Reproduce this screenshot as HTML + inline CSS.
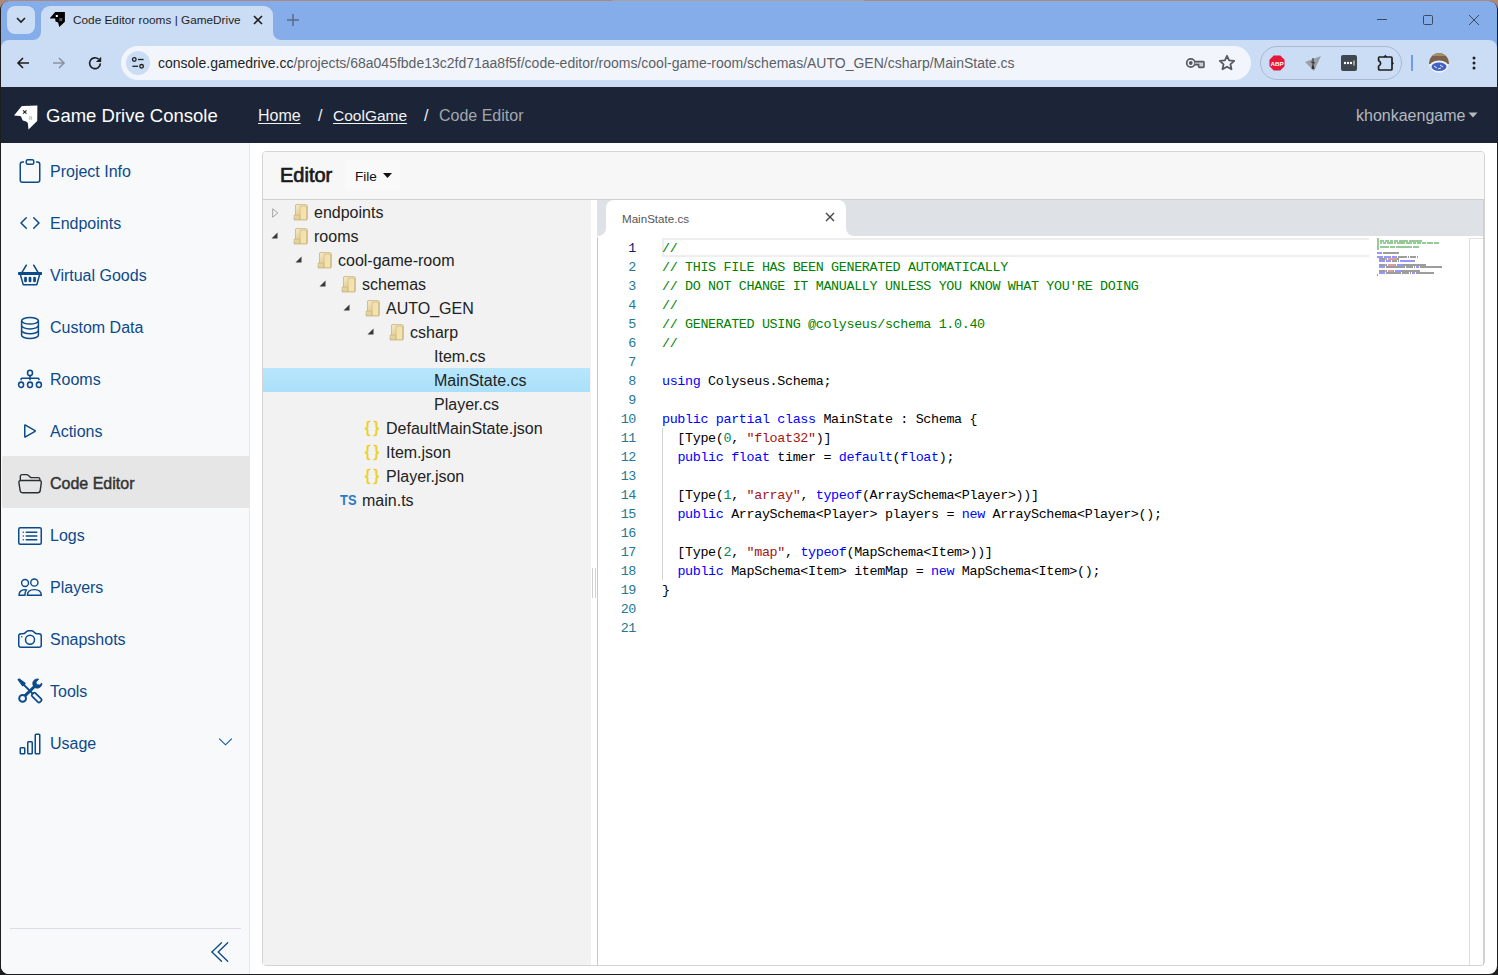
<!DOCTYPE html>
<html><head><meta charset="utf-8">
<style>
*{box-sizing:border-box;margin:0;padding:0}
html,body{width:1498px;height:975px;overflow:hidden;background:#b08676;font-family:"Liberation Sans",sans-serif;position:relative}
.a{position:absolute}
.nw{white-space:nowrap}
.mono{font-family:"Liberation Mono",monospace;font-size:13.4px;letter-spacing:-0.35px;line-height:19px;padding-top:1px;white-space:pre}
</style></head><body>
<!-- window frame -->
<div class="a" style="left:612px;top:0;width:252px;height:1px;background:#aca19a"></div>
<div class="a" style="left:0;top:1px;width:1498px;height:974px;background:#1e1e1e;border-radius:9px 9px 0 0"></div>
<!-- tab strip -->
<div class="a" style="left:1px;top:1px;width:1496px;height:39px;background:#85adea;border-radius:8px 8px 0 0"></div>
<div class="a" style="left:41px;top:6px;width:232px;height:40px;border-radius:9px 9px 0 0;background:#cbdcf5"></div>
<div class="a" style="left:33px;top:32px;width:8px;height:8px;background:#cbdcf5"></div>
<div class="a" style="left:25px;top:24px;width:16px;height:16px;border-radius:0 0 8px 0;background:#85adea"></div>
<div class="a" style="left:273px;top:32px;width:8px;height:8px;background:#cbdcf5"></div>
<div class="a" style="left:273px;top:24px;width:16px;height:16px;border-radius:0 0 0 8px;background:#85adea"></div>
<div class="a" style="left:7px;top:6px;width:28px;height:28px;border-radius:8px;background:#cbdcf5"></div>
<svg class="a" style="left:15px;top:15px" width="12" height="10" viewBox="0 0 12 10"><path d="M2 3 L6 7 L10 3" fill="none" stroke="#1f1f1f" stroke-width="1.6"/></svg>
<svg class="a" style="left:49px;top:11px" width="16" height="16" viewBox="0 0 16 16"><path d="M1 6.9 L6.2 1 H15.9 V10.7 L10.3 16 L9.1 11.5 L6.5 10.5 L6.2 7.6 L1 7.5 Z" fill="#000"/><rect x="6.8" y="4" width="2" height="2" fill="#fff"/><rect x="10.3" y="7.1" width="3" height="3" fill="#5a5a5a"/></svg>
<div class="a nw" style="left:73px;top:13px;font-size:11.8px;line-height:15px;color:#1f1f1f">Code Editor rooms | GameDrive</div>
<svg class="a" style="left:252px;top:14px" width="12" height="12" viewBox="0 0 12 12"><path d="M2 2 L10 10 M10 2 L2 10" stroke="#1f1f1f" stroke-width="1.6"/></svg>
<svg class="a" style="left:286px;top:13px" width="14" height="14" viewBox="0 0 14 14"><path d="M7 1 V13 M1 7 H13" stroke="#5a6a86" stroke-width="1.5"/></svg>
<svg class="a" style="left:1376px;top:14px" width="12" height="12" viewBox="0 0 12 12"><path d="M1 5.5 H11" stroke="#3b4a60" stroke-width="1"/></svg>
<svg class="a" style="left:1422px;top:14px" width="12" height="12" viewBox="0 0 12 12"><rect x="1.5" y="1.5" width="9" height="9" rx="1" fill="none" stroke="#3b4a60" stroke-width="1"/></svg>
<svg class="a" style="left:1468px;top:14px" width="12" height="12" viewBox="0 0 12 12"><path d="M1 1 L11 11 M11 1 L1 11" stroke="#3b4a60" stroke-width="1"/></svg>

<!-- toolbar -->
<div class="a" style="left:1px;top:40px;width:1496px;height:8px;background:#85adea"></div>
<div class="a" style="left:1px;top:40px;width:1496px;height:47px;background:#cbdcf5;border-radius:8px 8px 0 0"></div>
<svg class="a" style="left:15px;top:55px" width="16" height="16" viewBox="0 0 16 16"><path d="M14 8 H3 M8 3 L3 8 L8 13" fill="none" stroke="#1f1f1f" stroke-width="1.6"/></svg>
<svg class="a" style="left:51px;top:55px" width="16" height="16" viewBox="0 0 16 16"><path d="M2 8 H13 M8 3 L13 8 L8 13" fill="none" stroke="#8a93a3" stroke-width="1.6"/></svg>
<svg class="a" style="left:87px;top:55px" width="16" height="16" viewBox="0 0 16 16"><path d="M13.4 8.4 A5.4 5.4 0 1 1 11.6 4.2" fill="none" stroke="#1f1f1f" stroke-width="1.6"/><path d="M14.2 1.8 V7.1 H8.9 Z" fill="#1f1f1f"/></svg>
<div class="a" style="left:121px;top:46px;width:1130px;height:34px;border-radius:17px;background:#f2f6fc"></div>
<div class="a" style="left:126px;top:51px;width:24px;height:24px;border-radius:12px;background:#cbdcf5"></div>
<svg class="a" style="left:130px;top:55px" width="16" height="16" viewBox="0 0 16 16"><circle cx="4.3" cy="4.5" r="1.8" fill="none" stroke="#1f1f1f" stroke-width="1.3"/><path d="M8 4.5 H13.6" stroke="#1f1f1f" stroke-width="1.3"/><circle cx="11.6" cy="11.3" r="1.8" fill="none" stroke="#1f1f1f" stroke-width="1.3"/><path d="M2.4 11.3 H8" stroke="#1f1f1f" stroke-width="1.3"/></svg>
<div class="a nw" style="left:158px;top:55px;font-size:14px;line-height:17px;color:#1f1f1f">console.gamedrive.cc<span style="color:#5b5f66">/projects/68a045fbde13c2fd71aa8f5f/code-editor/rooms/cool-game-room/schemas/AUTO_GEN/csharp/MainState.cs</span></div>
<svg class="a" style="left:1184px;top:56px" width="22" height="14" viewBox="0 0 22 14"><circle cx="6.8" cy="7" r="4.1" fill="none" stroke="#555a60" stroke-width="1.7"/><circle cx="6.8" cy="7" r="1.9" fill="#555a60"/><path d="M10.8 5.6 H19.3 Q20 5.6 20 6.3 V10.6 Q20 11.4 19.2 11.4 H15.4 Q14.6 11.4 14.6 10.6 V8.6 H10.6" fill="#c9ccd1" stroke="#555a60" stroke-width="1.6" stroke-linejoin="round"/></svg>
<svg class="a" style="left:1218px;top:54px" width="18" height="18" viewBox="0 0 18 18"><path d="M9 1.8 L11.1 6.4 L16.2 6.9 L12.4 10.3 L13.5 15.3 L9 12.7 L4.5 15.3 L5.6 10.3 L1.8 6.9 L6.9 6.4 Z" fill="none" stroke="#555a60" stroke-width="1.8" stroke-linejoin="round"/></svg>
<div class="a" style="left:1260px;top:46px;width:142px;height:34px;border-radius:17px;border:1px solid #aab9d0"></div>
<svg class="a" style="left:1269px;top:55px" width="16" height="16" viewBox="0 0 18 18"><path d="M5.3 0.5 H12.7 L17.5 5.3 V12.7 L12.7 17.5 H5.3 L0.5 12.7 V5.3 Z" fill="#e3193b"/><text x="9" y="12" font-family="Liberation Sans" font-size="7" font-weight="700" fill="#fff" text-anchor="middle">ABP</text></svg>
<svg class="a" style="left:1304px;top:54px" width="18" height="18" viewBox="0 0 18 18"><path d="M1 8 L17 2 L10 17 Z" fill="#9aa0a6"/><path d="M9 4 L9 15 M7 8 L11 9 M8 15 L9 11 L10 15" stroke="#333" stroke-width="1.1" fill="none"/></svg>
<div class="a" style="left:1341px;top:55px;width:16px;height:16px;border-radius:2px;background:#3c474e"></div>
<svg class="a" style="left:1341px;top:55px" width="16" height="16" viewBox="0 0 16 16"><circle cx="4" cy="8" r="1.2" fill="#fff"/><circle cx="7" cy="8" r="1.2" fill="#fff"/><circle cx="10" cy="8" r="1.2" fill="#fff"/><path d="M13 5.5 V10.5" stroke="#fff" stroke-width="1"/></svg>
<svg class="a" style="left:1376px;top:53px" width="20" height="20" viewBox="0 0 20 20"><path d="M3.2 4 H15 Q16 4 16 5 V16 Q16 17 15 17 H3.6 Q2.6 17 2.6 16 V13.2 Q4.6 12.2 4.6 10.3 Q4.6 8.4 2.6 7.6 V5 Q2.6 4 3.2 4 Z" fill="none" stroke="#1f1f1f" stroke-width="1.7" stroke-linejoin="round"/><path d="M7.5 4 L9.3 1.6 L11.1 4 Z" fill="#1f1f1f"/><path d="M16 8.4 L18 10.3 L16 12.2 Z" fill="#1f1f1f"/></svg>
<div class="a" style="left:1411px;top:55px;width:2px;height:16px;background:#6c9bef"></div>
<svg class="a" style="left:1429px;top:53px" width="20" height="20" viewBox="0 0 20 20"><defs><clipPath id="av"><circle cx="10" cy="10" r="10"/></clipPath></defs><g clip-path="url(#av)"><rect width="20" height="20" fill="#cbdcf5"/><rect x="0" y="0" width="20" height="11" fill="#7b6149"/><rect x="0" y="0" width="20" height="3" fill="#a88c6a"/><ellipse cx="10" cy="14" rx="10" ry="6.5" fill="#eef2fa"/><ellipse cx="10" cy="13.8" rx="7.5" ry="4.2" fill="#3f62c4"/><path d="M5 13 L8 15 M11 12 L14 14 M9 16 L12 15" stroke="#e8eef8" stroke-width="1"/></g></svg>
<svg class="a" style="left:1468px;top:55px" width="12" height="16" viewBox="0 0 12 16"><circle cx="6" cy="3" r="1.5" fill="#1f1f1f"/><circle cx="6" cy="8" r="1.5" fill="#1f1f1f"/><circle cx="6" cy="13" r="1.5" fill="#1f1f1f"/></svg>

<!-- nav -->
<div class="a" style="left:1px;top:87px;width:1496px;height:56px;background:#1c2538"></div>
<svg class="a" style="left:10px;top:100px" width="32" height="34" viewBox="0 0 32 34"><path d="M4 15.4 L11.6 6.2 Q12 6 13 6 L27.4 5.6 L27.2 21 L18.5 29.6 L17.8 23 Q17 21.5 14.5 21 Q12.5 20.8 12 19 Q11.5 16 10 15.9 Z" fill="#fff"/><path d="M13.1 10.3 L16.5 13.7 M16.5 10.3 L13.1 13.7" stroke="#1c2538" stroke-width="1.2"/><path d="M19.6 15.8 V20 M21.4 15.8 V20 M18.8 17.2 H22.2 M18.8 18.8 H22.2" stroke="#a4a9b2" stroke-width="0.5"/></svg>
<div class="a nw" style="left:46px;top:105px;font-size:18.5px;line-height:22px;color:#fff">Game Drive Console</div>
<div class="a nw" style="left:258px;top:106px;font-size:16px;line-height:19px;color:#f2f2f2;text-decoration:underline;text-underline-offset:2px">Home</div>
<div class="a nw" style="left:318px;top:106px;font-size:16px;line-height:19px;color:#f2f2f2">/</div>
<div class="a nw" style="left:333px;top:106px;font-size:15.5px;line-height:19px;color:#f2f2f2;text-decoration:underline;text-underline-offset:2px">CoolGame</div>
<div class="a nw" style="left:424px;top:106px;font-size:16px;line-height:19px;color:#f2f2f2">/</div>
<div class="a nw" style="left:439px;top:106px;font-size:16px;line-height:19px;color:#a3a7ae">Code Editor</div>
<div class="a nw" style="left:1356px;top:106px;font-size:16px;line-height:19px;color:#b4b8bf">khonkaengame</div>
<svg class="a" style="left:1468px;top:112px" width="10" height="6" viewBox="0 0 10 6"><path d="M0.5 0.5 H9.5 L5 5.5 Z" fill="#b4b8bf"/></svg>
<!-- page -->
<div class="a" style="left:1px;top:143px;width:1496px;height:831px;background:#fff;border-radius:0 0 8px 8px"></div>
<div class="a" style="left:1px;top:143px;width:249px;height:831px;background:#f8f9fa;border-right:1px solid #e6e7e8;border-radius:0 0 0 8px"></div>
<!-- sidebar items -->
<svg class="a" style="left:18px;top:159px;color:#0c4a8a" width="24" height="24" viewBox="0 0 16 16" fill="currentColor"><path d="M4 1.5H3a2 2 0 0 0-2 2V14a2 2 0 0 0 2 2h10a2 2 0 0 0 2-2V3.5a2 2 0 0 0-2-2h-1v1h1a1 1 0 0 1 1 1V14a1 1 0 0 1-1 1H3a1 1 0 0 1-1-1V3.5a1 1 0 0 1 1-1h1v-1z"/><path d="M9.5 1a.5.5 0 0 1 .5.5v1a.5.5 0 0 1-.5.5h-3a.5.5 0 0 1-.5-.5v-1a.5.5 0 0 1 .5-.5h3zm-3-1A1.5 1.5 0 0 0 5 1.5v1A1.5 1.5 0 0 0 6.5 4h3A1.5 1.5 0 0 0 11 2.5v-1A1.5 1.5 0 0 0 9.5 0h-3z"/></svg>
<div class="a nw" style="left:50px;top:162px;font-size:16px;font-weight:400;line-height:20px;color:#0c4a8a">Project Info</div>
<svg class="a" style="left:18px;top:211px;color:#0c4a8a" width="24" height="24" viewBox="0 0 16 16" fill="currentColor"><path d="M5.854 4.854a.5.5 0 1 0-.708-.708l-3.5 3.5a.5.5 0 0 0 0 .708l3.5 3.5a.5.5 0 0 0 .708-.708L2.707 8l3.147-3.146zm4.292 0a.5.5 0 0 1 .708-.708l3.5 3.5a.5.5 0 0 1 0 .708l-3.5 3.5a.5.5 0 0 1-.708-.708L13.293 8l-3.147-3.146z"/></svg>
<div class="a nw" style="left:50px;top:214px;font-size:16px;font-weight:400;line-height:20px;color:#0c4a8a">Endpoints</div>
<svg class="a" style="left:18px;top:263px;color:#0c4a8a" width="24" height="24" viewBox="0 0 16 16" fill="currentColor"><path d="M5.757 1.071a.5.5 0 0 1 .172.686L3.383 6h9.234L10.07 1.757a.5.5 0 1 1 .858-.514L13.783 6H15.5a.5.5 0 0 1 .5.5v1a.5.5 0 0 1-.5.5h-.623l-1.844 6.456a.75.75 0 0 1-.722.544H3.69a.75.75 0 0 1-.722-.544L1.123 8H.5a.5.5 0 0 1-.5-.5v-1A.5.5 0 0 1 .5 6h1.717L5.07 1.243a.5.5 0 0 1 .686-.172zM2.163 8l1.714 6h8.246l1.714-6H2.163z"/><rect x="4.1" y="9.1" width="1.85" height="3.8" rx="0.9"/><rect x="7.08" y="9.1" width="1.85" height="3.8" rx="0.9"/><rect x="10.1" y="9.1" width="1.85" height="3.8" rx="0.9"/></svg>
<div class="a nw" style="left:50px;top:266px;font-size:16px;font-weight:400;line-height:20px;color:#0c4a8a">Virtual Goods</div>
<svg class="a" style="left:18px;top:315.5px;color:#0c4a8a" width="24" height="24" viewBox="0 0 16 16" fill="currentColor"><g fill="none" stroke="currentColor" stroke-width="1"><ellipse cx="8" cy="3.2" rx="5.6" ry="2.2"/><path d="M2.4 3.2V12.8C2.4 14 4.9 15 8 15S13.6 14 13.6 12.8V3.2"/><path d="M2.4 6.4C2.4 7.6 4.9 8.6 8 8.6S13.6 7.6 13.6 6.4"/><path d="M2.4 9.6C2.4 10.8 4.9 11.8 8 11.8S13.6 10.8 13.6 9.6"/></g></svg>
<div class="a nw" style="left:50px;top:318px;font-size:16px;font-weight:400;line-height:20px;color:#0c4a8a">Custom Data</div>
<svg class="a" style="left:16px;top:365px" width="28" height="28" viewBox="0 0 28 28"><g fill="none" stroke="#0c4a8a" stroke-width="1.55"><ellipse cx="14" cy="7.9" rx="2.5" ry="2.7"/><ellipse cx="5.1" cy="19.8" rx="2.5" ry="2.7"/><ellipse cx="14" cy="19.8" rx="2.5" ry="2.7"/><ellipse cx="22.9" cy="19.8" rx="2.5" ry="2.7"/><path d="M5.1 15.3 V14 Q5.1 13.2 5.9 13.2 H22.1 Q22.9 13.2 22.9 14 V15.3 M14 10.6 V15.3"/></g></svg>
<div class="a nw" style="left:50px;top:370px;font-size:16px;font-weight:400;line-height:20px;color:#0c4a8a">Rooms</div>
<svg class="a" style="left:18px;top:419px;color:#0c4a8a" width="24" height="24" viewBox="0 0 16 16" fill="currentColor"><path d="M10.804 8 5 4.633v6.734L10.804 8zm.792-.696a.802.802 0 0 1 0 1.392l-6.363 3.692C4.713 12.69 4 12.345 4 11.692V4.308c0-.653.713-.998 1.233-.696l6.363 3.692z"/></svg>
<div class="a nw" style="left:50px;top:422px;font-size:16px;font-weight:400;line-height:20px;color:#0c4a8a">Actions</div>
<div class="a" style="left:2px;top:456px;width:247px;height:52px;background:#e6e6e6;border-radius:2px 0 0 2px"></div>
<svg class="a" style="left:16px;top:470px" width="28" height="28" viewBox="0 0 28 28"><g fill="none" stroke="#2a2f36" stroke-width="1.4" stroke-linejoin="round"><path d="M4.3 10.5 V6.4 Q4.3 4.6 6.1 4.6 H10.6 Q11.6 4.6 12.4 5.4 L14.2 7.1 Q14.8 7.6 15.5 7.6 H22.2 Q23.9 7.6 23.9 9.3 V10.5"/><path d="M5 10.5 H23.2 Q25.5 10.5 25.3 12.6 L24.2 20.6 Q23.9 22.7 21.8 22.7 H6.4 Q4.5 22.7 4.2 20.8 L2.9 12.6 Q2.7 10.5 5 10.5 Z"/></g></svg>
<div class="a nw" style="left:50px;top:474px;font-size:16px;font-weight:400;line-height:20px;color:#333;-webkit-text-stroke:0.45px #333">Code Editor</div>
<svg class="a" style="left:18px;top:523.5px;color:#0c4a8a" width="24" height="24" viewBox="0 0 16 16" fill="currentColor"><path d="M14.5 3a.5.5 0 0 1 .5.5v9a.5.5 0 0 1-.5.5h-13a.5.5 0 0 1-.5-.5v-9a.5.5 0 0 1 .5-.5h13zm-13-1A1.5 1.5 0 0 0 0 3.5v9A1.5 1.5 0 0 0 1.5 14h13a1.5 1.5 0 0 0 1.5-1.5v-9A1.5 1.5 0 0 0 14.5 2h-13z"/><path d="M5 8a.5.5 0 0 1 .5-.5h7a.5.5 0 0 1 0 1h-7A.5.5 0 0 1 5 8zm0-2.5a.5.5 0 0 1 .5-.5h7a.5.5 0 0 1 0 1h-7a.5.5 0 0 1-.5-.5zm0 5a.5.5 0 0 1 .5-.5h7a.5.5 0 0 1 0 1h-7a.5.5 0 0 1-.5-.5zm-1-5a.5.5 0 1 1-1 0 .5.5 0 0 1 1 0zM4 8a.5.5 0 1 1-1 0 .5.5 0 0 1 1 0zm0 2.5a.5.5 0 1 1-1 0 .5.5 0 0 1 1 0z"/></svg>
<div class="a nw" style="left:50px;top:526px;font-size:16px;font-weight:400;line-height:20px;color:#0c4a8a">Logs</div>
<svg class="a" style="left:18px;top:576.5px;color:#0c4a8a" width="24" height="24" viewBox="0 0 16 16" fill="currentColor"><g fill="none" stroke="currentColor" stroke-width="0.95"><circle cx="4.7" cy="4" r="2.3"/><circle cx="10.9" cy="3.7" r="2.4"/><path d="M0.7 12.2Q0.7 9.3 3.4 8.6Q4.4 8.4 5.6 8.6Q4.6 9.9 4.6 12.2Z"/><path d="M6.3 12.2Q6.3 8.4 10.9 8.4Q15.5 8.4 15.5 12.2Z"/></g></svg>
<div class="a nw" style="left:50px;top:578px;font-size:16px;font-weight:400;line-height:20px;color:#0c4a8a">Players</div>
<svg class="a" style="left:18px;top:627px;color:#0c4a8a" width="24" height="24" viewBox="0 0 16 16" fill="currentColor"><path d="M15 12a1 1 0 0 1-1 1H2a1 1 0 0 1-1-1V6a1 1 0 0 1 1-1h1.172a3 3 0 0 0 2.12-.879l.83-.828A1 1 0 0 1 6.827 3h2.344a1 1 0 0 1 .707.293l.828.828A3 3 0 0 0 12.828 5H14a1 1 0 0 1 1 1v6zM2 4a2 2 0 0 0-2 2v6a2 2 0 0 0 2 2h12a2 2 0 0 0 2-2V6a2 2 0 0 0-2-2h-1.172a2 2 0 0 1-1.414-.586l-.828-.828A2 2 0 0 0 9.172 2H6.828a2 2 0 0 0-1.414.586l-.828.828A2 2 0 0 1 3.172 4H2z"/><path d="M8 11a2.5 2.5 0 1 1 0-5 2.5 2.5 0 0 1 0 5zm0 1a3.5 3.5 0 1 0 0-7 3.5 3.5 0 0 0 0 7zM3 6.5a.5.5 0 1 1-1 0 .5.5 0 0 1 1 0z"/></svg>
<div class="a nw" style="left:50px;top:630px;font-size:16px;font-weight:400;line-height:20px;color:#0c4a8a">Snapshots</div>
<svg class="a" style="left:16px;top:677px" width="28" height="28" viewBox="0 0 28 28"><g fill="#0c4a8a" stroke="#0c4a8a"><path d="M2.2 2.6 L3.2 2 L9 6.2 L8.2 8.2 L6.5 8.6 Z" stroke-width="1.2" stroke-linejoin="round"/><path d="M7.5 7.5 L16.5 16.5" stroke-width="1.8"/><rect x="15.2" y="18.3" width="11" height="4.6" rx="1.4" transform="rotate(45 20.7 20.6)" fill="none" stroke-width="1.7"/><circle cx="6.6" cy="21.4" r="3.4" fill="none" stroke-width="1.9"/><path d="M8.9 18.9 L19 9" stroke-width="3"/><path d="M22.8 2.2 A4.6 4.6 0 1 0 25.9 6.1 L23.4 8 L20.5 7.6 L20 5 Z" stroke-width="0.8" stroke-linejoin="round"/></g></svg>
<div class="a nw" style="left:50px;top:682px;font-size:16px;font-weight:400;line-height:20px;color:#0c4a8a">Tools</div>
<svg class="a" style="left:18px;top:731.5px;color:#0c4a8a" width="24" height="24" viewBox="0 0 16 16" fill="currentColor"><path d="M4 11H2v3h2v-3zm5-4H7v7h2V7zm5-5v12h-2V2h2zm-2-1a1 1 0 0 0-1 1v12a1 1 0 0 0 1 1h2a1 1 0 0 0 1-1V2a1 1 0 0 0-1-1h-2zM6 7a1 1 0 0 1 1-1h2a1 1 0 0 1 1 1v7a1 1 0 0 1-1 1H7a1 1 0 0 1-1-1V7zm-5 4a1 1 0 0 1 1-1h2a1 1 0 0 1 1 1v3a1 1 0 0 1-1 1H2a1 1 0 0 1-1-1v-3z"/></svg>
<div class="a nw" style="left:50px;top:734px;font-size:16px;font-weight:400;line-height:20px;color:#0c4a8a">Usage</div>
<svg class="a" style="left:216px;top:735px" width="18" height="14" viewBox="0 0 18 14"><path d="M3.2 3.6 L9.5 9.8 L15.8 3.6" fill="none" stroke="#0b58a8" stroke-width="1.15"/></svg>
<div class="a" style="left:10px;top:928px;width:231px;height:1px;background:#dcdee2"></div>
<svg class="a" style="left:208px;top:940px" width="24" height="24" viewBox="0 0 24 24"><path d="M13.5 2.7 L3.9 11.9 L13.5 21.3 M19.7 2.7 L10.2 11.9 L19.7 21.3" fill="none" stroke="#0c4a8a" stroke-width="1.35" stroke-linecap="round"/></svg>
<!-- editor card -->
<div class="a" style="left:262px;top:151px;width:1223px;height:815px;border:1px solid #d4d4d4;border-radius:4px;background:#fff"></div>
<div class="a" style="left:263px;top:152px;width:1221px;height:48px;background:#f7f7f7;border-bottom:1px solid #cfcfcf;border-radius:3px 3px 0 0"></div>
<div class="a nw" style="left:280px;top:164px;font-size:20px;font-weight:400;line-height:22px;color:#1a1a1a;-webkit-text-stroke:0.7px #1a1a1a">Editor</div>
<div class="a" style="left:345px;top:160px;width:55px;height:31px;background:#f9f9fa;border-radius:4px"></div>
<div class="a nw" style="left:355px;top:168px;font-size:13.6px;line-height:17px;color:#111">File</div>
<svg class="a" style="left:383px;top:173px" width="9" height="5" viewBox="0 0 9 5"><path d="M0 0 H9 L4.5 5 Z" fill="#111"/></svg>
<div class="a" style="left:263px;top:200px;width:328px;height:765px;background:#f2f2f2"></div>
<div class="a" style="left:263px;top:368px;width:327px;height:24px;background:linear-gradient(#b8e6fc,#abe0fa)"></div>
<svg class="a" style="left:272px;top:208px" width="7" height="10" viewBox="0 0 7 10"><path d="M0.7 0.8 L5.8 5 L0.7 9.2 Z" fill="none" stroke="#999" stroke-width="0.9"/></svg>
<svg class="a" style="left:293px;top:204px" width="16" height="17" viewBox="0 0 16 17"><defs><linearGradient id="fg0" x1="0" y1="0" x2="0" y2="1"><stop offset="0" stop-color="#f4e8c4"/><stop offset="1" stop-color="#e0c88a"/></linearGradient></defs><path d="M2.5 1.5 Q2.5 0.6 3.4 0.6 H12.6 Q14.4 0.6 14.4 2.4 V14.8 Q14.4 15.8 13.4 15.8 H4 Q2.5 15.8 2.5 14.5 Z" fill="url(#fg0)" stroke="#c9b27a" stroke-width="0.8"/><path d="M7 3 Q7 2.2 7.8 2.2 H13.6 V15.8 H8 Q7 15.8 7 14.8 Z" fill="#f1e2b0" stroke="#cdb57c" stroke-width="0.7"/><path d="M1.2 11 H6.8 V15.8 H2.2 Q1.2 15.8 1.2 14.8 Z" fill="#e6d29c" stroke="#c9b27a" stroke-width="0.7"/><path d="M0.6 14.6 Q1 16.4 2.6 16.4" fill="none" stroke="#8a8a8a" stroke-width="0.6" opacity="0.6"/></svg>
<div class="a nw" style="left:314px;top:203px;font-size:16px;line-height:19px;color:#222">endpoints</div>
<svg class="a" style="left:271px;top:232px" width="7" height="7" viewBox="0 0 7 7"><path d="M6.5 0.5 V6.5 H0.5 Z" fill="#3a3a3a"/></svg>
<svg class="a" style="left:293px;top:228px" width="16" height="17" viewBox="0 0 16 17"><defs><linearGradient id="fg1" x1="0" y1="0" x2="0" y2="1"><stop offset="0" stop-color="#f4e8c4"/><stop offset="1" stop-color="#e0c88a"/></linearGradient></defs><path d="M2.5 1.5 Q2.5 0.6 3.4 0.6 H12.6 Q14.4 0.6 14.4 2.4 V14.8 Q14.4 15.8 13.4 15.8 H4 Q2.5 15.8 2.5 14.5 Z" fill="url(#fg1)" stroke="#c9b27a" stroke-width="0.8"/><path d="M7 3 Q7 2.2 7.8 2.2 H13.6 V15.8 H8 Q7 15.8 7 14.8 Z" fill="#f1e2b0" stroke="#cdb57c" stroke-width="0.7"/><path d="M1.2 11 H6.8 V15.8 H2.2 Q1.2 15.8 1.2 14.8 Z" fill="#e6d29c" stroke="#c9b27a" stroke-width="0.7"/><path d="M0.6 14.6 Q1 16.4 2.6 16.4" fill="none" stroke="#8a8a8a" stroke-width="0.6" opacity="0.6"/></svg>
<div class="a nw" style="left:314px;top:227px;font-size:16px;line-height:19px;color:#222">rooms</div>
<svg class="a" style="left:295px;top:256px" width="7" height="7" viewBox="0 0 7 7"><path d="M6.5 0.5 V6.5 H0.5 Z" fill="#3a3a3a"/></svg>
<svg class="a" style="left:317px;top:252px" width="16" height="17" viewBox="0 0 16 17"><defs><linearGradient id="fg2" x1="0" y1="0" x2="0" y2="1"><stop offset="0" stop-color="#f4e8c4"/><stop offset="1" stop-color="#e0c88a"/></linearGradient></defs><path d="M2.5 1.5 Q2.5 0.6 3.4 0.6 H12.6 Q14.4 0.6 14.4 2.4 V14.8 Q14.4 15.8 13.4 15.8 H4 Q2.5 15.8 2.5 14.5 Z" fill="url(#fg2)" stroke="#c9b27a" stroke-width="0.8"/><path d="M7 3 Q7 2.2 7.8 2.2 H13.6 V15.8 H8 Q7 15.8 7 14.8 Z" fill="#f1e2b0" stroke="#cdb57c" stroke-width="0.7"/><path d="M1.2 11 H6.8 V15.8 H2.2 Q1.2 15.8 1.2 14.8 Z" fill="#e6d29c" stroke="#c9b27a" stroke-width="0.7"/><path d="M0.6 14.6 Q1 16.4 2.6 16.4" fill="none" stroke="#8a8a8a" stroke-width="0.6" opacity="0.6"/></svg>
<div class="a nw" style="left:338px;top:251px;font-size:16px;line-height:19px;color:#222">cool-game-room</div>
<svg class="a" style="left:319px;top:280px" width="7" height="7" viewBox="0 0 7 7"><path d="M6.5 0.5 V6.5 H0.5 Z" fill="#3a3a3a"/></svg>
<svg class="a" style="left:341px;top:276px" width="16" height="17" viewBox="0 0 16 17"><defs><linearGradient id="fg3" x1="0" y1="0" x2="0" y2="1"><stop offset="0" stop-color="#f4e8c4"/><stop offset="1" stop-color="#e0c88a"/></linearGradient></defs><path d="M2.5 1.5 Q2.5 0.6 3.4 0.6 H12.6 Q14.4 0.6 14.4 2.4 V14.8 Q14.4 15.8 13.4 15.8 H4 Q2.5 15.8 2.5 14.5 Z" fill="url(#fg3)" stroke="#c9b27a" stroke-width="0.8"/><path d="M7 3 Q7 2.2 7.8 2.2 H13.6 V15.8 H8 Q7 15.8 7 14.8 Z" fill="#f1e2b0" stroke="#cdb57c" stroke-width="0.7"/><path d="M1.2 11 H6.8 V15.8 H2.2 Q1.2 15.8 1.2 14.8 Z" fill="#e6d29c" stroke="#c9b27a" stroke-width="0.7"/><path d="M0.6 14.6 Q1 16.4 2.6 16.4" fill="none" stroke="#8a8a8a" stroke-width="0.6" opacity="0.6"/></svg>
<div class="a nw" style="left:362px;top:275px;font-size:16px;line-height:19px;color:#222">schemas</div>
<svg class="a" style="left:343px;top:304px" width="7" height="7" viewBox="0 0 7 7"><path d="M6.5 0.5 V6.5 H0.5 Z" fill="#3a3a3a"/></svg>
<svg class="a" style="left:365px;top:300px" width="16" height="17" viewBox="0 0 16 17"><defs><linearGradient id="fg4" x1="0" y1="0" x2="0" y2="1"><stop offset="0" stop-color="#f4e8c4"/><stop offset="1" stop-color="#e0c88a"/></linearGradient></defs><path d="M2.5 1.5 Q2.5 0.6 3.4 0.6 H12.6 Q14.4 0.6 14.4 2.4 V14.8 Q14.4 15.8 13.4 15.8 H4 Q2.5 15.8 2.5 14.5 Z" fill="url(#fg4)" stroke="#c9b27a" stroke-width="0.8"/><path d="M7 3 Q7 2.2 7.8 2.2 H13.6 V15.8 H8 Q7 15.8 7 14.8 Z" fill="#f1e2b0" stroke="#cdb57c" stroke-width="0.7"/><path d="M1.2 11 H6.8 V15.8 H2.2 Q1.2 15.8 1.2 14.8 Z" fill="#e6d29c" stroke="#c9b27a" stroke-width="0.7"/><path d="M0.6 14.6 Q1 16.4 2.6 16.4" fill="none" stroke="#8a8a8a" stroke-width="0.6" opacity="0.6"/></svg>
<div class="a nw" style="left:386px;top:299px;font-size:16px;line-height:19px;color:#222">AUTO_GEN</div>
<svg class="a" style="left:367px;top:328px" width="7" height="7" viewBox="0 0 7 7"><path d="M6.5 0.5 V6.5 H0.5 Z" fill="#3a3a3a"/></svg>
<svg class="a" style="left:389px;top:324px" width="16" height="17" viewBox="0 0 16 17"><defs><linearGradient id="fg5" x1="0" y1="0" x2="0" y2="1"><stop offset="0" stop-color="#f4e8c4"/><stop offset="1" stop-color="#e0c88a"/></linearGradient></defs><path d="M2.5 1.5 Q2.5 0.6 3.4 0.6 H12.6 Q14.4 0.6 14.4 2.4 V14.8 Q14.4 15.8 13.4 15.8 H4 Q2.5 15.8 2.5 14.5 Z" fill="url(#fg5)" stroke="#c9b27a" stroke-width="0.8"/><path d="M7 3 Q7 2.2 7.8 2.2 H13.6 V15.8 H8 Q7 15.8 7 14.8 Z" fill="#f1e2b0" stroke="#cdb57c" stroke-width="0.7"/><path d="M1.2 11 H6.8 V15.8 H2.2 Q1.2 15.8 1.2 14.8 Z" fill="#e6d29c" stroke="#c9b27a" stroke-width="0.7"/><path d="M0.6 14.6 Q1 16.4 2.6 16.4" fill="none" stroke="#8a8a8a" stroke-width="0.6" opacity="0.6"/></svg>
<div class="a nw" style="left:410px;top:323px;font-size:16px;line-height:19px;color:#222">csharp</div>
<div class="a nw" style="left:434px;top:347px;font-size:16px;line-height:19px;color:#222">Item.cs</div>
<div class="a nw" style="left:434px;top:371px;font-size:16px;line-height:19px;color:#222">MainState.cs</div>
<div class="a nw" style="left:434px;top:395px;font-size:16px;line-height:19px;color:#222">Player.cs</div>
<div class="a nw" style="left:365px;top:419px;font-size:16px;line-height:17px;color:#e8d21c;letter-spacing:3.5px;transform:scaleY(1.05);-webkit-text-stroke:0.5px #e8d21c">{}</div>
<div class="a nw" style="left:386px;top:419px;font-size:16px;line-height:19px;color:#222">DefaultMainState.json</div>
<div class="a nw" style="left:365px;top:443px;font-size:16px;line-height:17px;color:#e8d21c;letter-spacing:3.5px;transform:scaleY(1.05);-webkit-text-stroke:0.5px #e8d21c">{}</div>
<div class="a nw" style="left:386px;top:443px;font-size:16px;line-height:19px;color:#222">Item.json</div>
<div class="a nw" style="left:365px;top:467px;font-size:16px;line-height:17px;color:#e8d21c;letter-spacing:3.5px;transform:scaleY(1.05);-webkit-text-stroke:0.5px #e8d21c">{}</div>
<div class="a nw" style="left:386px;top:467px;font-size:16px;line-height:19px;color:#222">Player.json</div>
<div class="a nw" style="left:340px;top:491px;font-size:15px;font-weight:700;line-height:17px;color:#2a7bc4;transform:scaleX(0.86);transform-origin:0 0">TS</div>
<div class="a nw" style="left:362px;top:491px;font-size:16px;line-height:19px;color:#222">main.ts</div>
<div class="a" style="left:597px;top:200px;width:887px;height:36px;background:#dee1e6"></div>
<div class="a" style="left:597px;top:228px;width:887px;height:8px;background:#fff"></div>
<div class="a" style="left:597px;top:200px;width:9px;height:36px;background:#dee1e6;border-radius:0 0 8px 0"></div>
<div class="a" style="left:846px;top:200px;width:638px;height:36px;background:#dee1e6;border-radius:0 0 0 8px"></div>
<div class="a" style="left:606px;top:200px;width:240px;height:36px;background:#fff;border-radius:8px 8px 0 0"></div>
<div class="a nw" style="left:622px;top:212px;font-size:11.6px;line-height:14px;color:#555">MainState.cs</div>
<svg class="a" style="left:825px;top:212px" width="10" height="10" viewBox="0 0 10 10"><path d="M1 1 L9 9 M9 1 L1 9" stroke="#444" stroke-width="1.4"/></svg>
<div class="a" style="left:597px;top:237px;width:1px;height:728px;background:#c9c9c9"></div>
<div class="a" style="left:592px;top:568px;width:1px;height:30px;background:#d0d0d0"></div>
<div class="a" style="left:595px;top:568px;width:1px;height:30px;background:#d0d0d0"></div>
<div class="a" style="left:662px;top:238px;width:707px;height:19px;border:2px solid #eeeeee;border-right:none"></div>
<div class="a" style="left:662px;top:428px;width:1px;height:152px;background:#d3d3d3"></div>
<div class="a" style="left:1469px;top:238px;width:1px;height:727px;background:#dcdcdc"></div>
<div class="a" style="left:1469px;top:238px;width:14px;height:1px;background:#e4e4e4"></div>
<div class="a" style="left:1483px;top:200px;width:1px;height:765px;background:#cfcfcf"></div>
<div class="a nw mono" style="left:600px;width:36px;text-align:right;top:238px;color:#0b216f">1</div>
<div class="a nw mono" style="left:662px;top:238px"><span style="color:#008000">//</span></div>
<div class="a nw mono" style="left:600px;width:36px;text-align:right;top:257px;color:#237893">2</div>
<div class="a nw mono" style="left:662px;top:257px"><span style="color:#008000">// THIS FILE HAS BEEN GENERATED AUTOMATICALLY</span></div>
<div class="a nw mono" style="left:600px;width:36px;text-align:right;top:276px;color:#237893">3</div>
<div class="a nw mono" style="left:662px;top:276px"><span style="color:#008000">// DO NOT CHANGE IT MANUALLY UNLESS YOU KNOW WHAT YOU&#x27;RE DOING</span></div>
<div class="a nw mono" style="left:600px;width:36px;text-align:right;top:295px;color:#237893">4</div>
<div class="a nw mono" style="left:662px;top:295px"><span style="color:#008000">//</span></div>
<div class="a nw mono" style="left:600px;width:36px;text-align:right;top:314px;color:#237893">5</div>
<div class="a nw mono" style="left:662px;top:314px"><span style="color:#008000">// GENERATED USING @colyseus/schema 1.0.40</span></div>
<div class="a nw mono" style="left:600px;width:36px;text-align:right;top:333px;color:#237893">6</div>
<div class="a nw mono" style="left:662px;top:333px"><span style="color:#008000">//</span></div>
<div class="a nw mono" style="left:600px;width:36px;text-align:right;top:352px;color:#237893">7</div>
<div class="a nw mono" style="left:600px;width:36px;text-align:right;top:371px;color:#237893">8</div>
<div class="a nw mono" style="left:662px;top:371px"><span style="color:#0000ff">using</span><span style="color:#000000"> Colyseus.Schema;</span></div>
<div class="a nw mono" style="left:600px;width:36px;text-align:right;top:390px;color:#237893">9</div>
<div class="a nw mono" style="left:600px;width:36px;text-align:right;top:409px;color:#237893">10</div>
<div class="a nw mono" style="left:662px;top:409px"><span style="color:#0000ff">public</span><span style="color:#000000"> </span><span style="color:#0000ff">partial</span><span style="color:#000000"> </span><span style="color:#0000ff">class</span><span style="color:#000000"> MainState : Schema {</span></div>
<div class="a nw mono" style="left:600px;width:36px;text-align:right;top:428px;color:#237893">11</div>
<div class="a nw mono" style="left:662px;top:428px"><span style="color:#000000">  [Type(</span><span style="color:#098658">0</span><span style="color:#000000">, </span><span style="color:#a31515">&quot;float32&quot;</span><span style="color:#000000">)]</span></div>
<div class="a nw mono" style="left:600px;width:36px;text-align:right;top:447px;color:#237893">12</div>
<div class="a nw mono" style="left:662px;top:447px"><span style="color:#000000">  </span><span style="color:#0000ff">public</span><span style="color:#000000"> </span><span style="color:#0000ff">float</span><span style="color:#000000"> timer = </span><span style="color:#0000ff">default</span><span style="color:#000000">(</span><span style="color:#0000ff">float</span><span style="color:#000000">);</span></div>
<div class="a nw mono" style="left:600px;width:36px;text-align:right;top:466px;color:#237893">13</div>
<div class="a nw mono" style="left:600px;width:36px;text-align:right;top:485px;color:#237893">14</div>
<div class="a nw mono" style="left:662px;top:485px"><span style="color:#000000">  [Type(</span><span style="color:#098658">1</span><span style="color:#000000">, </span><span style="color:#a31515">&quot;array&quot;</span><span style="color:#000000">, </span><span style="color:#0000ff">typeof</span><span style="color:#000000">(ArraySchema&lt;Player&gt;))]</span></div>
<div class="a nw mono" style="left:600px;width:36px;text-align:right;top:504px;color:#237893">15</div>
<div class="a nw mono" style="left:662px;top:504px"><span style="color:#000000">  </span><span style="color:#0000ff">public</span><span style="color:#000000"> ArraySchema&lt;Player&gt; players = </span><span style="color:#0000ff">new</span><span style="color:#000000"> ArraySchema&lt;Player&gt;();</span></div>
<div class="a nw mono" style="left:600px;width:36px;text-align:right;top:523px;color:#237893">16</div>
<div class="a nw mono" style="left:600px;width:36px;text-align:right;top:542px;color:#237893">17</div>
<div class="a nw mono" style="left:662px;top:542px"><span style="color:#000000">  [Type(</span><span style="color:#098658">2</span><span style="color:#000000">, </span><span style="color:#a31515">&quot;map&quot;</span><span style="color:#000000">, </span><span style="color:#0000ff">typeof</span><span style="color:#000000">(MapSchema&lt;Item&gt;))]</span></div>
<div class="a nw mono" style="left:600px;width:36px;text-align:right;top:561px;color:#237893">18</div>
<div class="a nw mono" style="left:662px;top:561px"><span style="color:#000000">  </span><span style="color:#0000ff">public</span><span style="color:#000000"> MapSchema&lt;Item&gt; itemMap = </span><span style="color:#0000ff">new</span><span style="color:#000000"> MapSchema&lt;Item&gt;();</span></div>
<div class="a nw mono" style="left:600px;width:36px;text-align:right;top:580px;color:#237893">19</div>
<div class="a nw mono" style="left:662px;top:580px"><span style="color:#000000">}</span></div>
<div class="a nw mono" style="left:600px;width:36px;text-align:right;top:599px;color:#237893">20</div>
<div class="a nw mono" style="left:600px;width:36px;text-align:right;top:618px;color:#237893">21</div>
<svg class="a" style="left:1377px;top:238px" width="90" height="50"><rect x="0.08" y="0.35" width="0.84" height="1.3" fill="#008000" opacity="0.75"/><rect x="1.08" y="0.35" width="0.84" height="1.3" fill="#008000" opacity="0.75"/><rect x="0.08" y="2.35" width="0.84" height="1.3" fill="#008000" opacity="0.75"/><rect x="1.08" y="2.35" width="0.84" height="1.3" fill="#008000" opacity="0.75"/><rect x="3.08" y="2.35" width="0.84" height="1.3" fill="#008000" opacity="0.75"/><rect x="4.08" y="2.35" width="0.84" height="1.3" fill="#008000" opacity="0.75"/><rect x="5.08" y="2.35" width="0.84" height="1.3" fill="#008000" opacity="0.75"/><rect x="6.08" y="2.35" width="0.84" height="1.3" fill="#008000" opacity="0.75"/><rect x="8.08" y="2.35" width="0.84" height="1.3" fill="#008000" opacity="0.75"/><rect x="9.08" y="2.35" width="0.84" height="1.3" fill="#008000" opacity="0.75"/><rect x="10.08" y="2.35" width="0.84" height="1.3" fill="#008000" opacity="0.75"/><rect x="11.08" y="2.35" width="0.84" height="1.3" fill="#008000" opacity="0.75"/><rect x="13.08" y="2.35" width="0.84" height="1.3" fill="#008000" opacity="0.75"/><rect x="14.08" y="2.35" width="0.84" height="1.3" fill="#008000" opacity="0.75"/><rect x="15.08" y="2.35" width="0.84" height="1.3" fill="#008000" opacity="0.75"/><rect x="17.08" y="2.35" width="0.84" height="1.3" fill="#008000" opacity="0.75"/><rect x="18.08" y="2.35" width="0.84" height="1.3" fill="#008000" opacity="0.75"/><rect x="19.08" y="2.35" width="0.84" height="1.3" fill="#008000" opacity="0.75"/><rect x="20.08" y="2.35" width="0.84" height="1.3" fill="#008000" opacity="0.75"/><rect x="22.08" y="2.35" width="0.84" height="1.3" fill="#008000" opacity="0.75"/><rect x="23.08" y="2.35" width="0.84" height="1.3" fill="#008000" opacity="0.75"/><rect x="24.08" y="2.35" width="0.84" height="1.3" fill="#008000" opacity="0.75"/><rect x="25.08" y="2.35" width="0.84" height="1.3" fill="#008000" opacity="0.75"/><rect x="26.08" y="2.35" width="0.84" height="1.3" fill="#008000" opacity="0.75"/><rect x="27.08" y="2.35" width="0.84" height="1.3" fill="#008000" opacity="0.75"/><rect x="28.08" y="2.35" width="0.84" height="1.3" fill="#008000" opacity="0.75"/><rect x="29.08" y="2.35" width="0.84" height="1.3" fill="#008000" opacity="0.75"/><rect x="30.08" y="2.35" width="0.84" height="1.3" fill="#008000" opacity="0.75"/><rect x="32.08" y="2.35" width="0.84" height="1.3" fill="#008000" opacity="0.75"/><rect x="33.08" y="2.35" width="0.84" height="1.3" fill="#008000" opacity="0.75"/><rect x="34.08" y="2.35" width="0.84" height="1.3" fill="#008000" opacity="0.75"/><rect x="35.08" y="2.35" width="0.84" height="1.3" fill="#008000" opacity="0.75"/><rect x="36.08" y="2.35" width="0.84" height="1.3" fill="#008000" opacity="0.75"/><rect x="37.08" y="2.35" width="0.84" height="1.3" fill="#008000" opacity="0.75"/><rect x="38.08" y="2.35" width="0.84" height="1.3" fill="#008000" opacity="0.75"/><rect x="39.08" y="2.35" width="0.84" height="1.3" fill="#008000" opacity="0.75"/><rect x="40.08" y="2.35" width="0.84" height="1.3" fill="#008000" opacity="0.75"/><rect x="41.08" y="2.35" width="0.84" height="1.3" fill="#008000" opacity="0.75"/><rect x="42.08" y="2.35" width="0.84" height="1.3" fill="#008000" opacity="0.75"/><rect x="43.08" y="2.35" width="0.84" height="1.3" fill="#008000" opacity="0.75"/><rect x="44.08" y="2.35" width="0.84" height="1.3" fill="#008000" opacity="0.75"/><rect x="0.08" y="4.35" width="0.84" height="1.3" fill="#008000" opacity="0.75"/><rect x="1.08" y="4.35" width="0.84" height="1.3" fill="#008000" opacity="0.75"/><rect x="3.08" y="4.35" width="0.84" height="1.3" fill="#008000" opacity="0.75"/><rect x="4.08" y="4.35" width="0.84" height="1.3" fill="#008000" opacity="0.75"/><rect x="6.08" y="4.35" width="0.84" height="1.3" fill="#008000" opacity="0.75"/><rect x="7.08" y="4.35" width="0.84" height="1.3" fill="#008000" opacity="0.75"/><rect x="8.08" y="4.35" width="0.84" height="1.3" fill="#008000" opacity="0.75"/><rect x="10.08" y="4.35" width="0.84" height="1.3" fill="#008000" opacity="0.75"/><rect x="11.08" y="4.35" width="0.84" height="1.3" fill="#008000" opacity="0.75"/><rect x="12.08" y="4.35" width="0.84" height="1.3" fill="#008000" opacity="0.75"/><rect x="13.08" y="4.35" width="0.84" height="1.3" fill="#008000" opacity="0.75"/><rect x="14.08" y="4.35" width="0.84" height="1.3" fill="#008000" opacity="0.75"/><rect x="15.08" y="4.35" width="0.84" height="1.3" fill="#008000" opacity="0.75"/><rect x="17.08" y="4.35" width="0.84" height="1.3" fill="#008000" opacity="0.75"/><rect x="18.08" y="4.35" width="0.84" height="1.3" fill="#008000" opacity="0.75"/><rect x="20.08" y="4.35" width="0.84" height="1.3" fill="#008000" opacity="0.75"/><rect x="21.08" y="4.35" width="0.84" height="1.3" fill="#008000" opacity="0.75"/><rect x="22.08" y="4.35" width="0.84" height="1.3" fill="#008000" opacity="0.75"/><rect x="23.08" y="4.35" width="0.84" height="1.3" fill="#008000" opacity="0.75"/><rect x="24.08" y="4.35" width="0.84" height="1.3" fill="#008000" opacity="0.75"/><rect x="25.08" y="4.35" width="0.84" height="1.3" fill="#008000" opacity="0.75"/><rect x="26.08" y="4.35" width="0.84" height="1.3" fill="#008000" opacity="0.75"/><rect x="27.08" y="4.35" width="0.84" height="1.3" fill="#008000" opacity="0.75"/><rect x="29.08" y="4.35" width="0.84" height="1.3" fill="#008000" opacity="0.75"/><rect x="30.08" y="4.35" width="0.84" height="1.3" fill="#008000" opacity="0.75"/><rect x="31.08" y="4.35" width="0.84" height="1.3" fill="#008000" opacity="0.75"/><rect x="32.08" y="4.35" width="0.84" height="1.3" fill="#008000" opacity="0.75"/><rect x="33.08" y="4.35" width="0.84" height="1.3" fill="#008000" opacity="0.75"/><rect x="34.08" y="4.35" width="0.84" height="1.3" fill="#008000" opacity="0.75"/><rect x="36.08" y="4.35" width="0.84" height="1.3" fill="#008000" opacity="0.75"/><rect x="37.08" y="4.35" width="0.84" height="1.3" fill="#008000" opacity="0.75"/><rect x="38.08" y="4.35" width="0.84" height="1.3" fill="#008000" opacity="0.75"/><rect x="40.08" y="4.35" width="0.84" height="1.3" fill="#008000" opacity="0.75"/><rect x="41.08" y="4.35" width="0.84" height="1.3" fill="#008000" opacity="0.75"/><rect x="42.08" y="4.35" width="0.84" height="1.3" fill="#008000" opacity="0.75"/><rect x="43.08" y="4.35" width="0.84" height="1.3" fill="#008000" opacity="0.75"/><rect x="45.08" y="4.35" width="0.84" height="1.3" fill="#008000" opacity="0.75"/><rect x="46.08" y="4.35" width="0.84" height="1.3" fill="#008000" opacity="0.75"/><rect x="47.08" y="4.35" width="0.84" height="1.3" fill="#008000" opacity="0.75"/><rect x="48.08" y="4.35" width="0.84" height="1.3" fill="#008000" opacity="0.75"/><rect x="50.08" y="4.35" width="0.84" height="1.3" fill="#008000" opacity="0.75"/><rect x="51.08" y="4.35" width="0.84" height="1.3" fill="#008000" opacity="0.75"/><rect x="52.08" y="4.35" width="0.84" height="1.3" fill="#008000" opacity="0.75"/><rect x="53.08" y="4.35" width="0.84" height="1.3" fill="#008000" opacity="0.75"/><rect x="54.08" y="4.35" width="0.84" height="1.3" fill="#008000" opacity="0.75"/><rect x="55.08" y="4.35" width="0.84" height="1.3" fill="#008000" opacity="0.75"/><rect x="57.08" y="4.35" width="0.84" height="1.3" fill="#008000" opacity="0.75"/><rect x="58.08" y="4.35" width="0.84" height="1.3" fill="#008000" opacity="0.75"/><rect x="59.08" y="4.35" width="0.84" height="1.3" fill="#008000" opacity="0.75"/><rect x="60.08" y="4.35" width="0.84" height="1.3" fill="#008000" opacity="0.75"/><rect x="61.08" y="4.35" width="0.84" height="1.3" fill="#008000" opacity="0.75"/><rect x="0.08" y="6.35" width="0.84" height="1.3" fill="#008000" opacity="0.75"/><rect x="1.08" y="6.35" width="0.84" height="1.3" fill="#008000" opacity="0.75"/><rect x="0.08" y="8.35" width="0.84" height="1.3" fill="#008000" opacity="0.75"/><rect x="1.08" y="8.35" width="0.84" height="1.3" fill="#008000" opacity="0.75"/><rect x="3.08" y="8.35" width="0.84" height="1.3" fill="#008000" opacity="0.75"/><rect x="4.08" y="8.35" width="0.84" height="1.3" fill="#008000" opacity="0.75"/><rect x="5.08" y="8.35" width="0.84" height="1.3" fill="#008000" opacity="0.75"/><rect x="6.08" y="8.35" width="0.84" height="1.3" fill="#008000" opacity="0.75"/><rect x="7.08" y="8.35" width="0.84" height="1.3" fill="#008000" opacity="0.75"/><rect x="8.08" y="8.35" width="0.84" height="1.3" fill="#008000" opacity="0.75"/><rect x="9.08" y="8.35" width="0.84" height="1.3" fill="#008000" opacity="0.75"/><rect x="10.08" y="8.35" width="0.84" height="1.3" fill="#008000" opacity="0.75"/><rect x="11.08" y="8.35" width="0.84" height="1.3" fill="#008000" opacity="0.75"/><rect x="13.08" y="8.35" width="0.84" height="1.3" fill="#008000" opacity="0.75"/><rect x="14.08" y="8.35" width="0.84" height="1.3" fill="#008000" opacity="0.75"/><rect x="15.08" y="8.35" width="0.84" height="1.3" fill="#008000" opacity="0.75"/><rect x="16.08" y="8.35" width="0.84" height="1.3" fill="#008000" opacity="0.75"/><rect x="17.08" y="8.35" width="0.84" height="1.3" fill="#008000" opacity="0.75"/><rect x="19.08" y="8.35" width="0.84" height="1.3" fill="#008000" opacity="0.75"/><rect x="20.08" y="8.35" width="0.84" height="1.3" fill="#008000" opacity="0.75"/><rect x="21.08" y="8.35" width="0.84" height="1.3" fill="#008000" opacity="0.75"/><rect x="22.08" y="8.35" width="0.84" height="1.3" fill="#008000" opacity="0.75"/><rect x="23.08" y="8.35" width="0.84" height="1.3" fill="#008000" opacity="0.75"/><rect x="24.08" y="8.35" width="0.84" height="1.3" fill="#008000" opacity="0.75"/><rect x="25.08" y="8.35" width="0.84" height="1.3" fill="#008000" opacity="0.75"/><rect x="26.08" y="8.35" width="0.84" height="1.3" fill="#008000" opacity="0.75"/><rect x="27.08" y="8.35" width="0.84" height="1.3" fill="#008000" opacity="0.75"/><rect x="28.08" y="8.35" width="0.84" height="1.3" fill="#008000" opacity="0.75"/><rect x="29.08" y="8.35" width="0.84" height="1.3" fill="#008000" opacity="0.75"/><rect x="30.08" y="8.35" width="0.84" height="1.3" fill="#008000" opacity="0.75"/><rect x="31.08" y="8.35" width="0.84" height="1.3" fill="#008000" opacity="0.75"/><rect x="32.08" y="8.35" width="0.84" height="1.3" fill="#008000" opacity="0.75"/><rect x="33.08" y="8.35" width="0.84" height="1.3" fill="#008000" opacity="0.75"/><rect x="34.08" y="8.35" width="0.84" height="1.3" fill="#008000" opacity="0.75"/><rect x="36.08" y="8.35" width="0.84" height="1.3" fill="#008000" opacity="0.75"/><rect x="37.08" y="8.35" width="0.84" height="1.3" fill="#008000" opacity="0.75"/><rect x="38.08" y="8.35" width="0.84" height="1.3" fill="#008000" opacity="0.75"/><rect x="39.08" y="8.35" width="0.84" height="1.3" fill="#008000" opacity="0.75"/><rect x="40.08" y="8.35" width="0.84" height="1.3" fill="#008000" opacity="0.75"/><rect x="41.08" y="8.35" width="0.84" height="1.3" fill="#008000" opacity="0.75"/><rect x="0.08" y="10.35" width="0.84" height="1.3" fill="#008000" opacity="0.75"/><rect x="1.08" y="10.35" width="0.84" height="1.3" fill="#008000" opacity="0.75"/><rect x="0.08" y="14.35" width="0.84" height="1.3" fill="#0000ff" opacity="0.75"/><rect x="1.08" y="14.35" width="0.84" height="1.3" fill="#0000ff" opacity="0.75"/><rect x="2.08" y="14.35" width="0.84" height="1.3" fill="#0000ff" opacity="0.75"/><rect x="3.08" y="14.35" width="0.84" height="1.3" fill="#0000ff" opacity="0.75"/><rect x="4.08" y="14.35" width="0.84" height="1.3" fill="#0000ff" opacity="0.75"/><rect x="6.08" y="14.35" width="0.84" height="1.3" fill="#000000" opacity="0.7"/><rect x="7.08" y="14.35" width="0.84" height="1.3" fill="#000000" opacity="0.7"/><rect x="8.08" y="14.35" width="0.84" height="1.3" fill="#000000" opacity="0.7"/><rect x="9.08" y="14.35" width="0.84" height="1.3" fill="#000000" opacity="0.7"/><rect x="10.08" y="14.35" width="0.84" height="1.3" fill="#000000" opacity="0.7"/><rect x="11.08" y="14.35" width="0.84" height="1.3" fill="#000000" opacity="0.7"/><rect x="12.08" y="14.35" width="0.84" height="1.3" fill="#000000" opacity="0.7"/><rect x="13.08" y="14.35" width="0.84" height="1.3" fill="#000000" opacity="0.7"/><rect x="14.08" y="14.35" width="0.84" height="1.3" fill="#000000" opacity="0.7"/><rect x="15.08" y="14.35" width="0.84" height="1.3" fill="#000000" opacity="0.7"/><rect x="16.08" y="14.35" width="0.84" height="1.3" fill="#000000" opacity="0.7"/><rect x="17.08" y="14.35" width="0.84" height="1.3" fill="#000000" opacity="0.7"/><rect x="18.08" y="14.35" width="0.84" height="1.3" fill="#000000" opacity="0.7"/><rect x="19.08" y="14.35" width="0.84" height="1.3" fill="#000000" opacity="0.7"/><rect x="20.08" y="14.35" width="0.84" height="1.3" fill="#000000" opacity="0.7"/><rect x="21.08" y="14.35" width="0.84" height="1.3" fill="#000000" opacity="0.7"/><rect x="0.08" y="18.35" width="0.84" height="1.3" fill="#0000ff" opacity="0.75"/><rect x="1.08" y="18.35" width="0.84" height="1.3" fill="#0000ff" opacity="0.75"/><rect x="2.08" y="18.35" width="0.84" height="1.3" fill="#0000ff" opacity="0.75"/><rect x="3.08" y="18.35" width="0.84" height="1.3" fill="#0000ff" opacity="0.75"/><rect x="4.08" y="18.35" width="0.84" height="1.3" fill="#0000ff" opacity="0.75"/><rect x="5.08" y="18.35" width="0.84" height="1.3" fill="#0000ff" opacity="0.75"/><rect x="7.08" y="18.35" width="0.84" height="1.3" fill="#0000ff" opacity="0.75"/><rect x="8.08" y="18.35" width="0.84" height="1.3" fill="#0000ff" opacity="0.75"/><rect x="9.08" y="18.35" width="0.84" height="1.3" fill="#0000ff" opacity="0.75"/><rect x="10.08" y="18.35" width="0.84" height="1.3" fill="#0000ff" opacity="0.75"/><rect x="11.08" y="18.35" width="0.84" height="1.3" fill="#0000ff" opacity="0.75"/><rect x="12.08" y="18.35" width="0.84" height="1.3" fill="#0000ff" opacity="0.75"/><rect x="13.08" y="18.35" width="0.84" height="1.3" fill="#0000ff" opacity="0.75"/><rect x="15.08" y="18.35" width="0.84" height="1.3" fill="#0000ff" opacity="0.75"/><rect x="16.08" y="18.35" width="0.84" height="1.3" fill="#0000ff" opacity="0.75"/><rect x="17.08" y="18.35" width="0.84" height="1.3" fill="#0000ff" opacity="0.75"/><rect x="18.08" y="18.35" width="0.84" height="1.3" fill="#0000ff" opacity="0.75"/><rect x="19.08" y="18.35" width="0.84" height="1.3" fill="#0000ff" opacity="0.75"/><rect x="21.08" y="18.35" width="0.84" height="1.3" fill="#000000" opacity="0.7"/><rect x="22.08" y="18.35" width="0.84" height="1.3" fill="#000000" opacity="0.7"/><rect x="23.08" y="18.35" width="0.84" height="1.3" fill="#000000" opacity="0.7"/><rect x="24.08" y="18.35" width="0.84" height="1.3" fill="#000000" opacity="0.7"/><rect x="25.08" y="18.35" width="0.84" height="1.3" fill="#000000" opacity="0.7"/><rect x="26.08" y="18.35" width="0.84" height="1.3" fill="#000000" opacity="0.7"/><rect x="27.08" y="18.35" width="0.84" height="1.3" fill="#000000" opacity="0.7"/><rect x="28.08" y="18.35" width="0.84" height="1.3" fill="#000000" opacity="0.7"/><rect x="29.08" y="18.35" width="0.84" height="1.3" fill="#000000" opacity="0.7"/><rect x="31.08" y="18.35" width="0.84" height="1.3" fill="#000000" opacity="0.7"/><rect x="33.08" y="18.35" width="0.84" height="1.3" fill="#000000" opacity="0.7"/><rect x="34.08" y="18.35" width="0.84" height="1.3" fill="#000000" opacity="0.7"/><rect x="35.08" y="18.35" width="0.84" height="1.3" fill="#000000" opacity="0.7"/><rect x="36.08" y="18.35" width="0.84" height="1.3" fill="#000000" opacity="0.7"/><rect x="37.08" y="18.35" width="0.84" height="1.3" fill="#000000" opacity="0.7"/><rect x="38.08" y="18.35" width="0.84" height="1.3" fill="#000000" opacity="0.7"/><rect x="40.08" y="18.35" width="0.84" height="1.3" fill="#000000" opacity="0.7"/><rect x="2.08" y="20.35" width="0.84" height="1.3" fill="#000000" opacity="0.7"/><rect x="3.08" y="20.35" width="0.84" height="1.3" fill="#000000" opacity="0.7"/><rect x="4.08" y="20.35" width="0.84" height="1.3" fill="#000000" opacity="0.7"/><rect x="5.08" y="20.35" width="0.84" height="1.3" fill="#000000" opacity="0.7"/><rect x="6.08" y="20.35" width="0.84" height="1.3" fill="#000000" opacity="0.7"/><rect x="7.08" y="20.35" width="0.84" height="1.3" fill="#000000" opacity="0.7"/><rect x="8.08" y="20.35" width="0.84" height="1.3" fill="#098658" opacity="0.75"/><rect x="9.08" y="20.35" width="0.84" height="1.3" fill="#000000" opacity="0.7"/><rect x="11.08" y="20.35" width="0.84" height="1.3" fill="#a31515" opacity="0.75"/><rect x="12.08" y="20.35" width="0.84" height="1.3" fill="#a31515" opacity="0.75"/><rect x="13.08" y="20.35" width="0.84" height="1.3" fill="#a31515" opacity="0.75"/><rect x="14.08" y="20.35" width="0.84" height="1.3" fill="#a31515" opacity="0.75"/><rect x="15.08" y="20.35" width="0.84" height="1.3" fill="#a31515" opacity="0.75"/><rect x="16.08" y="20.35" width="0.84" height="1.3" fill="#a31515" opacity="0.75"/><rect x="17.08" y="20.35" width="0.84" height="1.3" fill="#a31515" opacity="0.75"/><rect x="18.08" y="20.35" width="0.84" height="1.3" fill="#a31515" opacity="0.75"/><rect x="19.08" y="20.35" width="0.84" height="1.3" fill="#a31515" opacity="0.75"/><rect x="20.08" y="20.35" width="0.84" height="1.3" fill="#000000" opacity="0.7"/><rect x="21.08" y="20.35" width="0.84" height="1.3" fill="#000000" opacity="0.7"/><rect x="2.08" y="22.35" width="0.84" height="1.3" fill="#0000ff" opacity="0.75"/><rect x="3.08" y="22.35" width="0.84" height="1.3" fill="#0000ff" opacity="0.75"/><rect x="4.08" y="22.35" width="0.84" height="1.3" fill="#0000ff" opacity="0.75"/><rect x="5.08" y="22.35" width="0.84" height="1.3" fill="#0000ff" opacity="0.75"/><rect x="6.08" y="22.35" width="0.84" height="1.3" fill="#0000ff" opacity="0.75"/><rect x="7.08" y="22.35" width="0.84" height="1.3" fill="#0000ff" opacity="0.75"/><rect x="9.08" y="22.35" width="0.84" height="1.3" fill="#0000ff" opacity="0.75"/><rect x="10.08" y="22.35" width="0.84" height="1.3" fill="#0000ff" opacity="0.75"/><rect x="11.08" y="22.35" width="0.84" height="1.3" fill="#0000ff" opacity="0.75"/><rect x="12.08" y="22.35" width="0.84" height="1.3" fill="#0000ff" opacity="0.75"/><rect x="13.08" y="22.35" width="0.84" height="1.3" fill="#0000ff" opacity="0.75"/><rect x="15.08" y="22.35" width="0.84" height="1.3" fill="#000000" opacity="0.7"/><rect x="16.08" y="22.35" width="0.84" height="1.3" fill="#000000" opacity="0.7"/><rect x="17.08" y="22.35" width="0.84" height="1.3" fill="#000000" opacity="0.7"/><rect x="18.08" y="22.35" width="0.84" height="1.3" fill="#000000" opacity="0.7"/><rect x="19.08" y="22.35" width="0.84" height="1.3" fill="#000000" opacity="0.7"/><rect x="21.08" y="22.35" width="0.84" height="1.3" fill="#000000" opacity="0.7"/><rect x="23.08" y="22.35" width="0.84" height="1.3" fill="#0000ff" opacity="0.75"/><rect x="24.08" y="22.35" width="0.84" height="1.3" fill="#0000ff" opacity="0.75"/><rect x="25.08" y="22.35" width="0.84" height="1.3" fill="#0000ff" opacity="0.75"/><rect x="26.08" y="22.35" width="0.84" height="1.3" fill="#0000ff" opacity="0.75"/><rect x="27.08" y="22.35" width="0.84" height="1.3" fill="#0000ff" opacity="0.75"/><rect x="28.08" y="22.35" width="0.84" height="1.3" fill="#0000ff" opacity="0.75"/><rect x="29.08" y="22.35" width="0.84" height="1.3" fill="#0000ff" opacity="0.75"/><rect x="30.08" y="22.35" width="0.84" height="1.3" fill="#000000" opacity="0.7"/><rect x="31.08" y="22.35" width="0.84" height="1.3" fill="#0000ff" opacity="0.75"/><rect x="32.08" y="22.35" width="0.84" height="1.3" fill="#0000ff" opacity="0.75"/><rect x="33.08" y="22.35" width="0.84" height="1.3" fill="#0000ff" opacity="0.75"/><rect x="34.08" y="22.35" width="0.84" height="1.3" fill="#0000ff" opacity="0.75"/><rect x="35.08" y="22.35" width="0.84" height="1.3" fill="#0000ff" opacity="0.75"/><rect x="36.08" y="22.35" width="0.84" height="1.3" fill="#000000" opacity="0.7"/><rect x="37.08" y="22.35" width="0.84" height="1.3" fill="#000000" opacity="0.7"/><rect x="2.08" y="26.35" width="0.84" height="1.3" fill="#000000" opacity="0.7"/><rect x="3.08" y="26.35" width="0.84" height="1.3" fill="#000000" opacity="0.7"/><rect x="4.08" y="26.35" width="0.84" height="1.3" fill="#000000" opacity="0.7"/><rect x="5.08" y="26.35" width="0.84" height="1.3" fill="#000000" opacity="0.7"/><rect x="6.08" y="26.35" width="0.84" height="1.3" fill="#000000" opacity="0.7"/><rect x="7.08" y="26.35" width="0.84" height="1.3" fill="#000000" opacity="0.7"/><rect x="8.08" y="26.35" width="0.84" height="1.3" fill="#098658" opacity="0.75"/><rect x="9.08" y="26.35" width="0.84" height="1.3" fill="#000000" opacity="0.7"/><rect x="11.08" y="26.35" width="0.84" height="1.3" fill="#a31515" opacity="0.75"/><rect x="12.08" y="26.35" width="0.84" height="1.3" fill="#a31515" opacity="0.75"/><rect x="13.08" y="26.35" width="0.84" height="1.3" fill="#a31515" opacity="0.75"/><rect x="14.08" y="26.35" width="0.84" height="1.3" fill="#a31515" opacity="0.75"/><rect x="15.08" y="26.35" width="0.84" height="1.3" fill="#a31515" opacity="0.75"/><rect x="16.08" y="26.35" width="0.84" height="1.3" fill="#a31515" opacity="0.75"/><rect x="17.08" y="26.35" width="0.84" height="1.3" fill="#a31515" opacity="0.75"/><rect x="18.08" y="26.35" width="0.84" height="1.3" fill="#000000" opacity="0.7"/><rect x="20.08" y="26.35" width="0.84" height="1.3" fill="#0000ff" opacity="0.75"/><rect x="21.08" y="26.35" width="0.84" height="1.3" fill="#0000ff" opacity="0.75"/><rect x="22.08" y="26.35" width="0.84" height="1.3" fill="#0000ff" opacity="0.75"/><rect x="23.08" y="26.35" width="0.84" height="1.3" fill="#0000ff" opacity="0.75"/><rect x="24.08" y="26.35" width="0.84" height="1.3" fill="#0000ff" opacity="0.75"/><rect x="25.08" y="26.35" width="0.84" height="1.3" fill="#0000ff" opacity="0.75"/><rect x="26.08" y="26.35" width="0.84" height="1.3" fill="#000000" opacity="0.7"/><rect x="27.08" y="26.35" width="0.84" height="1.3" fill="#000000" opacity="0.7"/><rect x="28.08" y="26.35" width="0.84" height="1.3" fill="#000000" opacity="0.7"/><rect x="29.08" y="26.35" width="0.84" height="1.3" fill="#000000" opacity="0.7"/><rect x="30.08" y="26.35" width="0.84" height="1.3" fill="#000000" opacity="0.7"/><rect x="31.08" y="26.35" width="0.84" height="1.3" fill="#000000" opacity="0.7"/><rect x="32.08" y="26.35" width="0.84" height="1.3" fill="#000000" opacity="0.7"/><rect x="33.08" y="26.35" width="0.84" height="1.3" fill="#000000" opacity="0.7"/><rect x="34.08" y="26.35" width="0.84" height="1.3" fill="#000000" opacity="0.7"/><rect x="35.08" y="26.35" width="0.84" height="1.3" fill="#000000" opacity="0.7"/><rect x="36.08" y="26.35" width="0.84" height="1.3" fill="#000000" opacity="0.7"/><rect x="37.08" y="26.35" width="0.84" height="1.3" fill="#000000" opacity="0.7"/><rect x="38.08" y="26.35" width="0.84" height="1.3" fill="#000000" opacity="0.7"/><rect x="39.08" y="26.35" width="0.84" height="1.3" fill="#000000" opacity="0.7"/><rect x="40.08" y="26.35" width="0.84" height="1.3" fill="#000000" opacity="0.7"/><rect x="41.08" y="26.35" width="0.84" height="1.3" fill="#000000" opacity="0.7"/><rect x="42.08" y="26.35" width="0.84" height="1.3" fill="#000000" opacity="0.7"/><rect x="43.08" y="26.35" width="0.84" height="1.3" fill="#000000" opacity="0.7"/><rect x="44.08" y="26.35" width="0.84" height="1.3" fill="#000000" opacity="0.7"/><rect x="45.08" y="26.35" width="0.84" height="1.3" fill="#000000" opacity="0.7"/><rect x="46.08" y="26.35" width="0.84" height="1.3" fill="#000000" opacity="0.7"/><rect x="47.08" y="26.35" width="0.84" height="1.3" fill="#000000" opacity="0.7"/><rect x="48.08" y="26.35" width="0.84" height="1.3" fill="#000000" opacity="0.7"/><rect x="2.08" y="28.35" width="0.84" height="1.3" fill="#0000ff" opacity="0.75"/><rect x="3.08" y="28.35" width="0.84" height="1.3" fill="#0000ff" opacity="0.75"/><rect x="4.08" y="28.35" width="0.84" height="1.3" fill="#0000ff" opacity="0.75"/><rect x="5.08" y="28.35" width="0.84" height="1.3" fill="#0000ff" opacity="0.75"/><rect x="6.08" y="28.35" width="0.84" height="1.3" fill="#0000ff" opacity="0.75"/><rect x="7.08" y="28.35" width="0.84" height="1.3" fill="#0000ff" opacity="0.75"/><rect x="9.08" y="28.35" width="0.84" height="1.3" fill="#000000" opacity="0.7"/><rect x="10.08" y="28.35" width="0.84" height="1.3" fill="#000000" opacity="0.7"/><rect x="11.08" y="28.35" width="0.84" height="1.3" fill="#000000" opacity="0.7"/><rect x="12.08" y="28.35" width="0.84" height="1.3" fill="#000000" opacity="0.7"/><rect x="13.08" y="28.35" width="0.84" height="1.3" fill="#000000" opacity="0.7"/><rect x="14.08" y="28.35" width="0.84" height="1.3" fill="#000000" opacity="0.7"/><rect x="15.08" y="28.35" width="0.84" height="1.3" fill="#000000" opacity="0.7"/><rect x="16.08" y="28.35" width="0.84" height="1.3" fill="#000000" opacity="0.7"/><rect x="17.08" y="28.35" width="0.84" height="1.3" fill="#000000" opacity="0.7"/><rect x="18.08" y="28.35" width="0.84" height="1.3" fill="#000000" opacity="0.7"/><rect x="19.08" y="28.35" width="0.84" height="1.3" fill="#000000" opacity="0.7"/><rect x="20.08" y="28.35" width="0.84" height="1.3" fill="#000000" opacity="0.7"/><rect x="21.08" y="28.35" width="0.84" height="1.3" fill="#000000" opacity="0.7"/><rect x="22.08" y="28.35" width="0.84" height="1.3" fill="#000000" opacity="0.7"/><rect x="23.08" y="28.35" width="0.84" height="1.3" fill="#000000" opacity="0.7"/><rect x="24.08" y="28.35" width="0.84" height="1.3" fill="#000000" opacity="0.7"/><rect x="25.08" y="28.35" width="0.84" height="1.3" fill="#000000" opacity="0.7"/><rect x="26.08" y="28.35" width="0.84" height="1.3" fill="#000000" opacity="0.7"/><rect x="27.08" y="28.35" width="0.84" height="1.3" fill="#000000" opacity="0.7"/><rect x="29.08" y="28.35" width="0.84" height="1.3" fill="#000000" opacity="0.7"/><rect x="30.08" y="28.35" width="0.84" height="1.3" fill="#000000" opacity="0.7"/><rect x="31.08" y="28.35" width="0.84" height="1.3" fill="#000000" opacity="0.7"/><rect x="32.08" y="28.35" width="0.84" height="1.3" fill="#000000" opacity="0.7"/><rect x="33.08" y="28.35" width="0.84" height="1.3" fill="#000000" opacity="0.7"/><rect x="34.08" y="28.35" width="0.84" height="1.3" fill="#000000" opacity="0.7"/><rect x="35.08" y="28.35" width="0.84" height="1.3" fill="#000000" opacity="0.7"/><rect x="37.08" y="28.35" width="0.84" height="1.3" fill="#000000" opacity="0.7"/><rect x="39.08" y="28.35" width="0.84" height="1.3" fill="#0000ff" opacity="0.75"/><rect x="40.08" y="28.35" width="0.84" height="1.3" fill="#0000ff" opacity="0.75"/><rect x="41.08" y="28.35" width="0.84" height="1.3" fill="#0000ff" opacity="0.75"/><rect x="43.08" y="28.35" width="0.84" height="1.3" fill="#000000" opacity="0.7"/><rect x="44.08" y="28.35" width="0.84" height="1.3" fill="#000000" opacity="0.7"/><rect x="45.08" y="28.35" width="0.84" height="1.3" fill="#000000" opacity="0.7"/><rect x="46.08" y="28.35" width="0.84" height="1.3" fill="#000000" opacity="0.7"/><rect x="47.08" y="28.35" width="0.84" height="1.3" fill="#000000" opacity="0.7"/><rect x="48.08" y="28.35" width="0.84" height="1.3" fill="#000000" opacity="0.7"/><rect x="49.08" y="28.35" width="0.84" height="1.3" fill="#000000" opacity="0.7"/><rect x="50.08" y="28.35" width="0.84" height="1.3" fill="#000000" opacity="0.7"/><rect x="51.08" y="28.35" width="0.84" height="1.3" fill="#000000" opacity="0.7"/><rect x="52.08" y="28.35" width="0.84" height="1.3" fill="#000000" opacity="0.7"/><rect x="53.08" y="28.35" width="0.84" height="1.3" fill="#000000" opacity="0.7"/><rect x="54.08" y="28.35" width="0.84" height="1.3" fill="#000000" opacity="0.7"/><rect x="55.08" y="28.35" width="0.84" height="1.3" fill="#000000" opacity="0.7"/><rect x="56.08" y="28.35" width="0.84" height="1.3" fill="#000000" opacity="0.7"/><rect x="57.08" y="28.35" width="0.84" height="1.3" fill="#000000" opacity="0.7"/><rect x="58.08" y="28.35" width="0.84" height="1.3" fill="#000000" opacity="0.7"/><rect x="59.08" y="28.35" width="0.84" height="1.3" fill="#000000" opacity="0.7"/><rect x="60.08" y="28.35" width="0.84" height="1.3" fill="#000000" opacity="0.7"/><rect x="61.08" y="28.35" width="0.84" height="1.3" fill="#000000" opacity="0.7"/><rect x="62.08" y="28.35" width="0.84" height="1.3" fill="#000000" opacity="0.7"/><rect x="63.08" y="28.35" width="0.84" height="1.3" fill="#000000" opacity="0.7"/><rect x="64.08" y="28.35" width="0.84" height="1.3" fill="#000000" opacity="0.7"/><rect x="2.08" y="32.35" width="0.84" height="1.3" fill="#000000" opacity="0.7"/><rect x="3.08" y="32.35" width="0.84" height="1.3" fill="#000000" opacity="0.7"/><rect x="4.08" y="32.35" width="0.84" height="1.3" fill="#000000" opacity="0.7"/><rect x="5.08" y="32.35" width="0.84" height="1.3" fill="#000000" opacity="0.7"/><rect x="6.08" y="32.35" width="0.84" height="1.3" fill="#000000" opacity="0.7"/><rect x="7.08" y="32.35" width="0.84" height="1.3" fill="#000000" opacity="0.7"/><rect x="8.08" y="32.35" width="0.84" height="1.3" fill="#098658" opacity="0.75"/><rect x="9.08" y="32.35" width="0.84" height="1.3" fill="#000000" opacity="0.7"/><rect x="11.08" y="32.35" width="0.84" height="1.3" fill="#a31515" opacity="0.75"/><rect x="12.08" y="32.35" width="0.84" height="1.3" fill="#a31515" opacity="0.75"/><rect x="13.08" y="32.35" width="0.84" height="1.3" fill="#a31515" opacity="0.75"/><rect x="14.08" y="32.35" width="0.84" height="1.3" fill="#a31515" opacity="0.75"/><rect x="15.08" y="32.35" width="0.84" height="1.3" fill="#a31515" opacity="0.75"/><rect x="16.08" y="32.35" width="0.84" height="1.3" fill="#000000" opacity="0.7"/><rect x="18.08" y="32.35" width="0.84" height="1.3" fill="#0000ff" opacity="0.75"/><rect x="19.08" y="32.35" width="0.84" height="1.3" fill="#0000ff" opacity="0.75"/><rect x="20.08" y="32.35" width="0.84" height="1.3" fill="#0000ff" opacity="0.75"/><rect x="21.08" y="32.35" width="0.84" height="1.3" fill="#0000ff" opacity="0.75"/><rect x="22.08" y="32.35" width="0.84" height="1.3" fill="#0000ff" opacity="0.75"/><rect x="23.08" y="32.35" width="0.84" height="1.3" fill="#0000ff" opacity="0.75"/><rect x="24.08" y="32.35" width="0.84" height="1.3" fill="#000000" opacity="0.7"/><rect x="25.08" y="32.35" width="0.84" height="1.3" fill="#000000" opacity="0.7"/><rect x="26.08" y="32.35" width="0.84" height="1.3" fill="#000000" opacity="0.7"/><rect x="27.08" y="32.35" width="0.84" height="1.3" fill="#000000" opacity="0.7"/><rect x="28.08" y="32.35" width="0.84" height="1.3" fill="#000000" opacity="0.7"/><rect x="29.08" y="32.35" width="0.84" height="1.3" fill="#000000" opacity="0.7"/><rect x="30.08" y="32.35" width="0.84" height="1.3" fill="#000000" opacity="0.7"/><rect x="31.08" y="32.35" width="0.84" height="1.3" fill="#000000" opacity="0.7"/><rect x="32.08" y="32.35" width="0.84" height="1.3" fill="#000000" opacity="0.7"/><rect x="33.08" y="32.35" width="0.84" height="1.3" fill="#000000" opacity="0.7"/><rect x="34.08" y="32.35" width="0.84" height="1.3" fill="#000000" opacity="0.7"/><rect x="35.08" y="32.35" width="0.84" height="1.3" fill="#000000" opacity="0.7"/><rect x="36.08" y="32.35" width="0.84" height="1.3" fill="#000000" opacity="0.7"/><rect x="37.08" y="32.35" width="0.84" height="1.3" fill="#000000" opacity="0.7"/><rect x="38.08" y="32.35" width="0.84" height="1.3" fill="#000000" opacity="0.7"/><rect x="39.08" y="32.35" width="0.84" height="1.3" fill="#000000" opacity="0.7"/><rect x="40.08" y="32.35" width="0.84" height="1.3" fill="#000000" opacity="0.7"/><rect x="41.08" y="32.35" width="0.84" height="1.3" fill="#000000" opacity="0.7"/><rect x="42.08" y="32.35" width="0.84" height="1.3" fill="#000000" opacity="0.7"/><rect x="2.08" y="34.35" width="0.84" height="1.3" fill="#0000ff" opacity="0.75"/><rect x="3.08" y="34.35" width="0.84" height="1.3" fill="#0000ff" opacity="0.75"/><rect x="4.08" y="34.35" width="0.84" height="1.3" fill="#0000ff" opacity="0.75"/><rect x="5.08" y="34.35" width="0.84" height="1.3" fill="#0000ff" opacity="0.75"/><rect x="6.08" y="34.35" width="0.84" height="1.3" fill="#0000ff" opacity="0.75"/><rect x="7.08" y="34.35" width="0.84" height="1.3" fill="#0000ff" opacity="0.75"/><rect x="9.08" y="34.35" width="0.84" height="1.3" fill="#000000" opacity="0.7"/><rect x="10.08" y="34.35" width="0.84" height="1.3" fill="#000000" opacity="0.7"/><rect x="11.08" y="34.35" width="0.84" height="1.3" fill="#000000" opacity="0.7"/><rect x="12.08" y="34.35" width="0.84" height="1.3" fill="#000000" opacity="0.7"/><rect x="13.08" y="34.35" width="0.84" height="1.3" fill="#000000" opacity="0.7"/><rect x="14.08" y="34.35" width="0.84" height="1.3" fill="#000000" opacity="0.7"/><rect x="15.08" y="34.35" width="0.84" height="1.3" fill="#000000" opacity="0.7"/><rect x="16.08" y="34.35" width="0.84" height="1.3" fill="#000000" opacity="0.7"/><rect x="17.08" y="34.35" width="0.84" height="1.3" fill="#000000" opacity="0.7"/><rect x="18.08" y="34.35" width="0.84" height="1.3" fill="#000000" opacity="0.7"/><rect x="19.08" y="34.35" width="0.84" height="1.3" fill="#000000" opacity="0.7"/><rect x="20.08" y="34.35" width="0.84" height="1.3" fill="#000000" opacity="0.7"/><rect x="21.08" y="34.35" width="0.84" height="1.3" fill="#000000" opacity="0.7"/><rect x="22.08" y="34.35" width="0.84" height="1.3" fill="#000000" opacity="0.7"/><rect x="23.08" y="34.35" width="0.84" height="1.3" fill="#000000" opacity="0.7"/><rect x="25.08" y="34.35" width="0.84" height="1.3" fill="#000000" opacity="0.7"/><rect x="26.08" y="34.35" width="0.84" height="1.3" fill="#000000" opacity="0.7"/><rect x="27.08" y="34.35" width="0.84" height="1.3" fill="#000000" opacity="0.7"/><rect x="28.08" y="34.35" width="0.84" height="1.3" fill="#000000" opacity="0.7"/><rect x="29.08" y="34.35" width="0.84" height="1.3" fill="#000000" opacity="0.7"/><rect x="30.08" y="34.35" width="0.84" height="1.3" fill="#000000" opacity="0.7"/><rect x="31.08" y="34.35" width="0.84" height="1.3" fill="#000000" opacity="0.7"/><rect x="33.08" y="34.35" width="0.84" height="1.3" fill="#000000" opacity="0.7"/><rect x="35.08" y="34.35" width="0.84" height="1.3" fill="#0000ff" opacity="0.75"/><rect x="36.08" y="34.35" width="0.84" height="1.3" fill="#0000ff" opacity="0.75"/><rect x="37.08" y="34.35" width="0.84" height="1.3" fill="#0000ff" opacity="0.75"/><rect x="39.08" y="34.35" width="0.84" height="1.3" fill="#000000" opacity="0.7"/><rect x="40.08" y="34.35" width="0.84" height="1.3" fill="#000000" opacity="0.7"/><rect x="41.08" y="34.35" width="0.84" height="1.3" fill="#000000" opacity="0.7"/><rect x="42.08" y="34.35" width="0.84" height="1.3" fill="#000000" opacity="0.7"/><rect x="43.08" y="34.35" width="0.84" height="1.3" fill="#000000" opacity="0.7"/><rect x="44.08" y="34.35" width="0.84" height="1.3" fill="#000000" opacity="0.7"/><rect x="45.08" y="34.35" width="0.84" height="1.3" fill="#000000" opacity="0.7"/><rect x="46.08" y="34.35" width="0.84" height="1.3" fill="#000000" opacity="0.7"/><rect x="47.08" y="34.35" width="0.84" height="1.3" fill="#000000" opacity="0.7"/><rect x="48.08" y="34.35" width="0.84" height="1.3" fill="#000000" opacity="0.7"/><rect x="49.08" y="34.35" width="0.84" height="1.3" fill="#000000" opacity="0.7"/><rect x="50.08" y="34.35" width="0.84" height="1.3" fill="#000000" opacity="0.7"/><rect x="51.08" y="34.35" width="0.84" height="1.3" fill="#000000" opacity="0.7"/><rect x="52.08" y="34.35" width="0.84" height="1.3" fill="#000000" opacity="0.7"/><rect x="53.08" y="34.35" width="0.84" height="1.3" fill="#000000" opacity="0.7"/><rect x="54.08" y="34.35" width="0.84" height="1.3" fill="#000000" opacity="0.7"/><rect x="55.08" y="34.35" width="0.84" height="1.3" fill="#000000" opacity="0.7"/><rect x="56.08" y="34.35" width="0.84" height="1.3" fill="#000000" opacity="0.7"/><rect x="0.08" y="36.35" width="0.84" height="1.3" fill="#000000" opacity="0.7"/></svg>
</body></html>
